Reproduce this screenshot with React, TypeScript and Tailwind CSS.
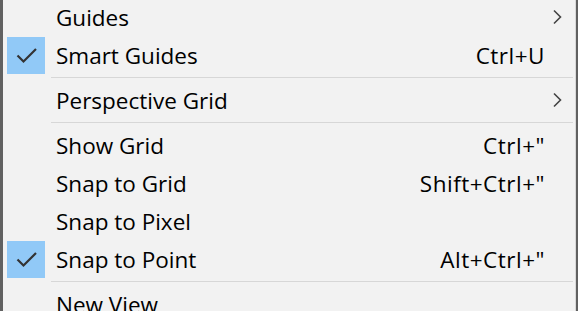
import React from "react";

type Item =
  | { kind: "item"; label: string; shortcut?: string; checked?: boolean; submenu?: boolean }
  | { kind: "sep" };

const items: Item[] = [
  { kind: "item", label: "Guides", submenu: true },
  { kind: "item", label: "Smart Guides", shortcut: "Ctrl+U", checked: true },
  { kind: "sep" },
  { kind: "item", label: "Perspective Grid", submenu: true },
  { kind: "sep" },
  { kind: "item", label: "Show Grid", shortcut: 'Ctrl+"' },
  { kind: "item", label: "Snap to Grid", shortcut: 'Shift+Ctrl+"' },
  { kind: "item", label: "Snap to Pixel" },
  { kind: "item", label: "Snap to Point", shortcut: 'Alt+Ctrl+"', checked: true },
  { kind: "sep" },
  { kind: "item", label: "New View" },
];

function Check() {
  return (
    <svg width="38" height="37" viewBox="0 0 38 37">
      <path d="M10.5 18.5 L16.5 24.5 L29 12" fill="none" stroke="#333333" strokeWidth="2.2" />
    </svg>
  );
}

function Chevron() {
  return (
    <svg width="10" height="16" viewBox="0 0 10 16">
      <path d="M1 1.5 L7.5 8 L1 14.5" fill="none" stroke="#444444" strokeWidth="1.6" />
    </svg>
  );
}

export default function App() {
  return (
    <div
      className="w-[578px] h-[311px] overflow-hidden bg-[#f2f2f2] border-l-[3px] border-l-[#616161] flex"
      style={{ fontFamily: '"Open Sans", "Noto Sans", sans-serif' }}
    >
      <div className="flex-1 flex flex-col -mt-[2px]">
        {items.map((it, i) =>
          it.kind === "sep" ? (
            <div key={i} className="h-[7px] shrink-0 flex items-center pl-[48px] pr-[2px]">
              <div className="h-px w-full bg-[#d7d7d7]" />
            </div>
          ) : (
            <div key={i} className="h-[38px] shrink-0 flex items-center text-[22.5px] text-black leading-none">
              <div className="w-[53px] h-full flex items-center pl-[4px]">
                {it.checked ? (
                  <div className="w-[38px] h-[37px] bg-[#91c9f7]">
                    <Check />
                  </div>
                ) : null}
              </div>
              <div className="flex-1 pt-[2px] whitespace-nowrap">{it.label}</div>
              <div className="pt-[2px] tracking-[0.5px] whitespace-nowrap">{it.shortcut ?? ""}</div>
              <div className="w-[30px] h-full flex items-center pl-[8px]">
                {it.submenu ? <Chevron /> : null}
              </div>
            </div>
          )
        )}
      </div>
      <div className="w-[1px] bg-[#d9d9d9]" />
      <div className="w-[2px] bg-[#616161]" />
    </div>
  );
}
